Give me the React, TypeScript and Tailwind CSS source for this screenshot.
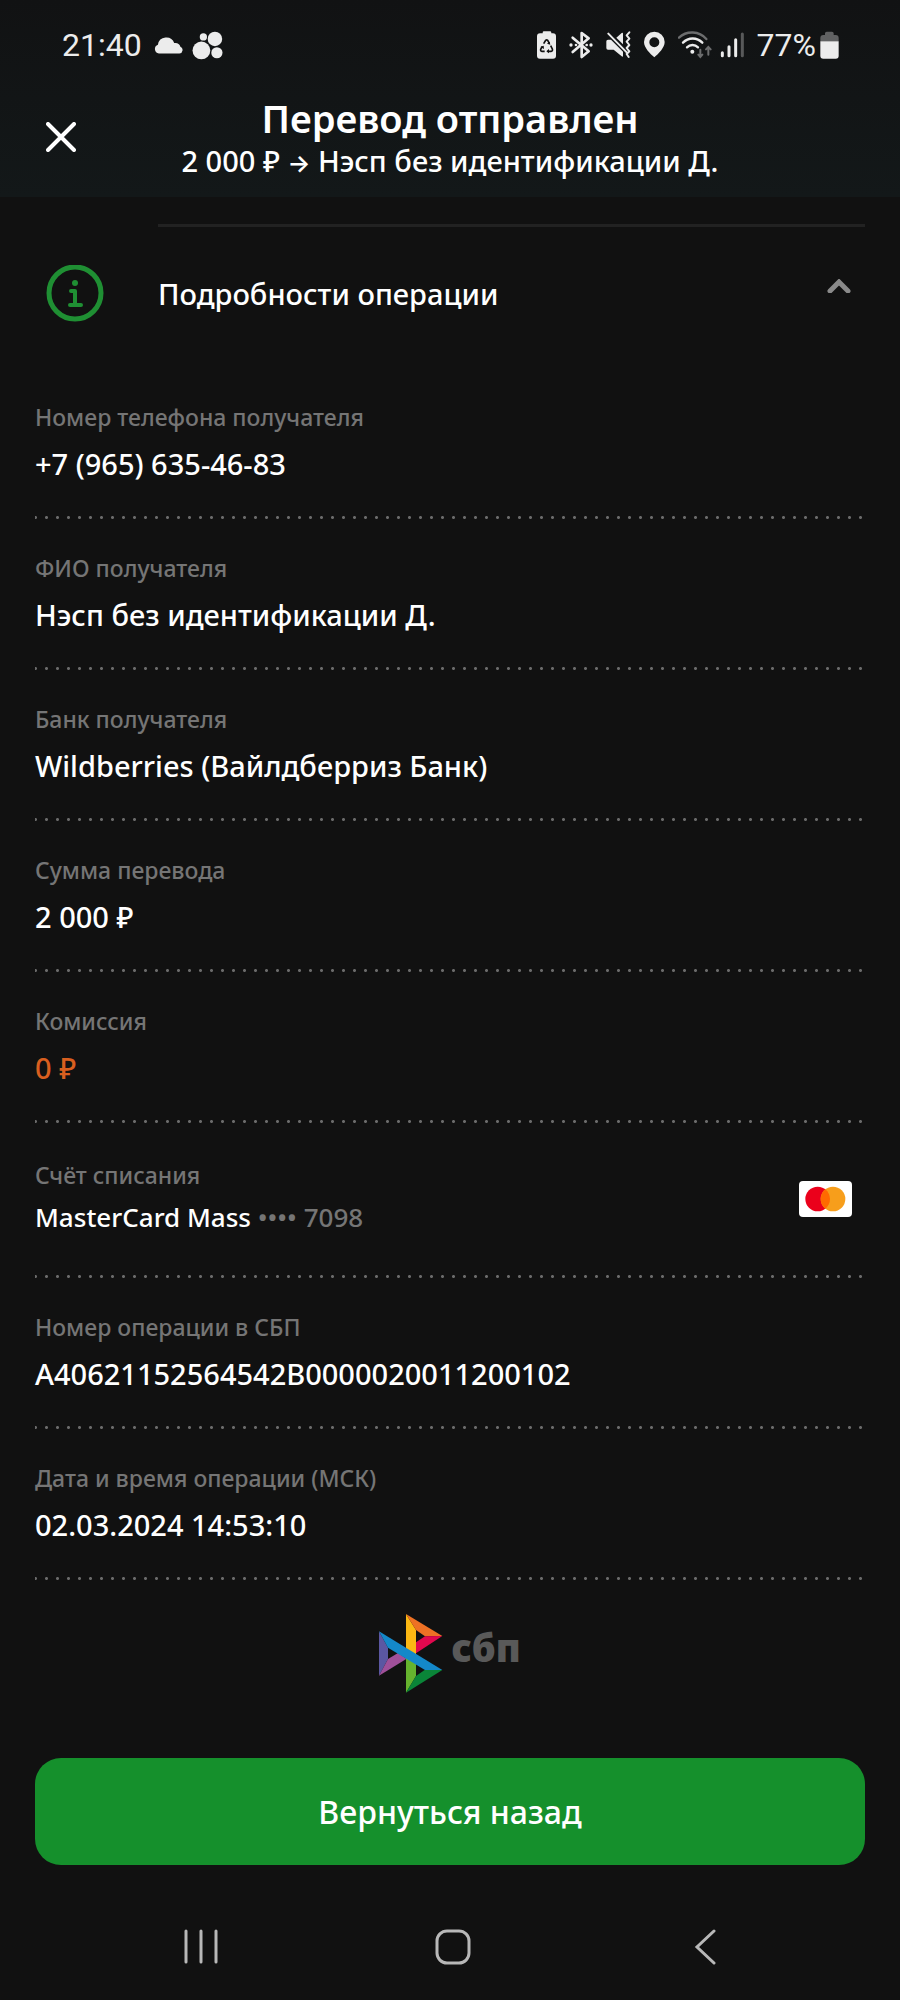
import { useState } from "react";

type Field = {
  label: string;
  value: string;
  accent?: boolean;
};

const transferFields: Field[] = [
  { label: "Номер телефона получателя", value: "+7 (965) 635-46-83" },
  { label: "ФИО получателя", value: "Нэсп без идентификации Д." },
  { label: "Банк получателя", value: "Wildberries (Вайлдберриз Банк)" },
  { label: "Сумма перевода", value: "2 000 ₽" },
  { label: "Комиссия", value: "0 ₽", accent: true },
];

const operationFields: Field[] = [
  { label: "Номер операции в СБП", value: "A40621152564542B0000020011200102" },
  { label: "Дата и время операции (МСК)", value: "02.03.2024 14:53:10" },
];

function StatusBar() {
  return (
    <div className="flex h-[90px] items-center justify-between pl-[62px] pr-[61px] font-['Roboto',sans-serif] text-[32px] leading-none text-[#ececec]">
      <div className="flex items-center gap-3">
        <span>21:40</span>
        <svg className="h-[17px] w-[30px]" viewBox="460 110 92 51" fill="currentColor">
          <path d="M475 160a14 14 0 0 1-3-27 26 26 0 0 1 50-5 17 17 0 0 1 19 11 11 11 0 0 1-3 21z" />
        </svg>
        <svg className="-ml-1 h-[29px] w-[31px]" viewBox="577 94 93 88" fill="currentColor">
          <circle cx="611" cy="112" r="11" />
          <circle cx="646" cy="118" r="22" />
          <circle cx="605" cy="153" r="27" />
          <circle cx="652" cy="160" r="17" />
        </svg>
      </div>

      <div className="flex items-center gap-[13px]">
        <svg className="h-[28px] w-[19px]" viewBox="261 95 57 84">
          <path
            d="M278 102v-2q0-4 4-4h18q4 0 4 4v2h5q9 0 9 9v58q0 9-9 9h-39q-9 0-9-9v-58q0-9 9-9z"
            fill="#ececec"
          />
          <g fill="none" stroke="#111" strokeWidth="5">
            <path d="M281 133l6-10q3-3 6 0l5 9M277 141l-5 9q-1 5 4 6h8M302 139l5 10q2 6-4 7h-10" />
          </g>
          <path d="M301 136l-10-3 8-6zM271 143l10-4 1 10zM297 149v13l-8-6z" fill="#111" />
        </svg>
        <svg className="h-[28px] w-[24px]" viewBox="358 95 72 84" fill="none" stroke="currentColor" strokeWidth="8">
          <path d="M369 115l48 41-21 17V101l21 16-48 41" strokeLinejoin="round" strokeLinecap="round" />
          <circle cx="364" cy="137" r="5" fill="currentColor" stroke="none" />
          <circle cx="379" cy="137" r="4" fill="currentColor" stroke="none" />
          <circle cx="411" cy="137" r="4" fill="currentColor" stroke="none" />
          <circle cx="424" cy="137" r="5" fill="currentColor" stroke="none" />
        </svg>
        <svg className="h-[28px] w-[25px]" viewBox="467 95 75 84">
          <path
            d="M473 121h9l36 36v13q0 4-4 1l-24-20h-17q-5 0-5-5v-20q0-5 5-5zM498 115l16-14q4-3 4 2v32z"
            fill="currentColor"
          />
          <path
            d="M474 103l55 56M537 99l-8 9 8 10-8 9 8 10-8 9 8 10-8 8 6 9"
            fill="none"
            stroke="currentColor"
            strokeWidth="6"
            strokeLinecap="round"
            strokeLinejoin="round"
          />
        </svg>
        <svg className="h-[28px] w-[21px]" viewBox="582 95 63 84" fill="currentColor" fillRule="evenodd">
          <path d="M613 97a31 31 0 0 1 31 31c0 17-18 35-31 46-13-11-31-29-31-46a31 31 0 0 1 31-31zm0 17a15 15 0 1 0 0 30 15 15 0 0 0 0-30z" />
        </svg>
        <div className="flex items-center gap-2">
          <svg className="h-[28px] w-[34px]" viewBox="684 95 102 84" fill="none" strokeWidth="7" strokeLinecap="round">
            <path d="M687 115a57 57 0 0 1 82 4" stroke="#6c6d6e" />
            <path d="M699 130a40 40 0 0 1 58 0M711 144a23 23 0 0 1 33 0" stroke="#ececec" />
            <circle cx="727" cy="157" r="6" fill="#ececec" />
            <path d="M751 151v20M745 166l6 7 6-7M775 166v-22M768 150l7-7 7 7" stroke="#6c6d6e" strokeWidth="6" />
          </svg>
          <svg className="h-[28px] w-[24px]" viewBox="808 95 72 84" strokeWidth="9" strokeLinecap="round">
            <path d="M815 160v9M835 142v27M855 121v48" stroke="#ececec" />
            <path d="M875 104v65" stroke="#58595a" />
          </svg>
        </div>
        <div className="flex items-center gap-1">
          <span>77%</span>
          <svg className="h-[28px] w-[19px]" viewBox="1112 95 55 84">
            <path d="M1112 126v-10q0-9 9-9h5v-5q0-5 5-5h16q5 0 5 5v5h6q9 0 9 9v10z" fill="#606162" />
            <path d="M1112 126h55v43q0 9-9 9h-37q-9 0-9-9z" fill="#ececec" />
          </svg>
        </div>
      </div>
    </div>
  );
}

function DottedLine() {
  return (
    <div className="h-[3px] bg-[radial-gradient(circle,#6b6b6b_1px,transparent_2px)] bg-[length:11px_3px] bg-[position:-5px_0] bg-repeat-x" />
  );
}

function FieldRow({ label, value, accent }: Field) {
  return (
    <div>
      <dl className="flex h-[148px] flex-col justify-end pb-[34px]">
        <dt className="text-[23px] font-medium leading-8 text-[#757575]">{label}</dt>
        <dd className={`mt-[13px] text-[29px] font-medium leading-9 ${accent ? "text-[#d95f1f]" : "text-white"}`}>
          {value}
        </dd>
      </dl>
      <DottedLine />
    </div>
  );
}

function MasterCardIcon() {
  return (
    <svg className="mr-[13px] h-[36px] w-[53px]" viewBox="0 0 159 108" role="img" aria-label="MasterCard">
      <rect width="159" height="108" rx="12" fill="#fff" />
      <circle cx="56" cy="54" r="37" fill="#eb001b" />
      <circle cx="102" cy="54" r="37" fill="#f79e1b" />
      <path d="M79 25a37 37 0 0 1 0 58 37 37 0 0 1 0-58z" fill="#ff6a00" />
    </svg>
  );
}

function SbpLogo() {
  return (
    <div className="flex items-center justify-center gap-2">
      <svg className="h-[80px] w-[64px]" viewBox="120 160 192 240">
        <path d="M120 215l27 49v34l-27 50z" fill="#5b57a2" />
        <path d="M120 348l27-50 30-18 26 17z" fill="#a0509a" />
        <path d="M201 163l30 48v75l-30-18z" fill="#fcb813" />
        <path d="M201 163l109 66-52 1-27-19z" fill="#ee7124" />
        <path d="M310 229l-79 52v-33l27-18z" fill="#e2084f" />
        <path d="M201 290l30 18v41l-30 50z" fill="#66b32e" />
        <path d="M201 399l30-50 27-19 52 1z" fill="#0a8538" />
        <path d="M120 215l190 116h-52L147 264z" fill="#1488c9" />
      </svg>
      <span className="pb-3 text-[38px] font-black leading-none text-[#595959]">сбп</span>
    </div>
  );
}

export default function App() {
  const [open, setOpen] = useState(true);

  return (
    <div className="flex min-h-screen flex-col bg-[#111111] font-['Noto_Sans',sans-serif] text-white">
      <header className="bg-linear-to-b from-[#111213] to-[#131819]">
        <StatusBar />
        <div className="grid h-[107px] grid-cols-[1fr_auto_1fr] pl-[46px]">
          <button type="button" aria-label="Закрыть" className="mt-8 h-[30px] w-[30px]">
            <svg viewBox="0 0 30 30" fill="none" stroke="currentColor" strokeWidth="4" strokeLinecap="round">
              <path d="M2 2l26 26M28 2L2 28" />
            </svg>
          </button>
          <div className="pr-[46px] text-center">
            <h1 className="mt-0.5 text-[38px] font-semibold leading-[52px]">Перевод отправлен</h1>
            <p className="text-[29px] font-medium leading-[34px]">
              2 000 ₽ <span className="font-['Inter',sans-serif] text-[24px] font-semibold leading-none">→</span> Нэсп
              без идентификации Д.
            </p>
          </div>
        </div>
      </header>

      <main className="flex flex-1 flex-col px-[35px] pt-[27px]">
        <div className="ml-[123px] h-[3px] bg-[#222222]" />
        <button
          type="button"
          aria-expanded={open}
          onClick={() => setOpen(!open)}
          className="flex h-[141px] items-center pb-2 pr-[14px] text-left">
          <svg className="ml-[11px] h-[58px] w-[58px] shrink-0" viewBox="0 0 58 58" fill="none" stroke="#1f8f33">
            <circle cx="29" cy="28" r="26" strokeWidth="5" />
            <circle cx="29" cy="18" r="3" fill="#1f8f33" stroke="none" />
            <path d="M25 26h4v14M24 40h11" strokeWidth="4" strokeLinecap="round" strokeLinejoin="round" />
          </svg>
          <span className="ml-[54px] flex-1 text-[29px] font-medium">Подробности операции</span>
          <svg
            className={`mb-4 h-[14px] w-[24px] ${open ? "" : "rotate-180"}`}
            viewBox="0 0 24 14"
            fill="none"
            stroke="#8a8a8a"
            strokeWidth="5"
            strokeLinecap="round">
            <path d="M3 12l9-9 9 9" />
          </svg>
        </button>

        {open && (
          <div>
            {transferFields.map((field) => (
              <FieldRow key={field.label} {...field} />
            ))}

            <div className="flex h-[152px] items-center justify-between">
              <dl className="pb-1">
                <dt className="text-[23px] font-medium leading-8 text-[#757575]">Счёт списания</dt>
                <dd className="mt-2 text-[26px] font-medium leading-9">
                  MasterCard Mass <span className="text-[#757575]">•••• 7098</span>
                </dd>
              </dl>
              <MasterCardIcon />
            </div>
            <DottedLine />

            {operationFields.map((field) => (
              <FieldRow key={field.label} {...field} />
            ))}
          </div>
        )}

        <div className="mt-[33px]">
          <SbpLogo />
        </div>

        <button
          type="button"
          className="mt-auto h-[107px] w-full rounded-[26px] bg-[#15902c] text-[32px] font-medium text-white">
          Вернуться назад
        </button>
      </main>

      <nav className="mt-[64px] flex h-[71px] items-start justify-between pl-[183px] pr-[177px] text-[#b8b8b8]">
        <button type="button" aria-label="Недавние приложения" className="h-[36px] w-[36px]">
          <svg viewBox="0 0 36 36" stroke="currentColor" strokeWidth="3" strokeLinecap="round">
            <path d="M3 2v31M18 2v31M33 2v31" />
          </svg>
        </button>
        <button type="button" aria-label="Главный экран" className="h-[36px] w-[36px]">
          <svg viewBox="0 0 36 36" fill="none" stroke="currentColor" strokeWidth="3">
            <rect x="2" y="2" width="32" height="32" rx="10" />
          </svg>
        </button>
        <button type="button" aria-label="Назад" className="h-[36px] w-[36px]">
          <svg viewBox="0 0 36 36" fill="none" stroke="currentColor" strokeWidth="3" strokeLinecap="round">
            <path d="M27 2L10 18l17 16" />
          </svg>
        </button>
      </nav>
    </div>
  );
}
